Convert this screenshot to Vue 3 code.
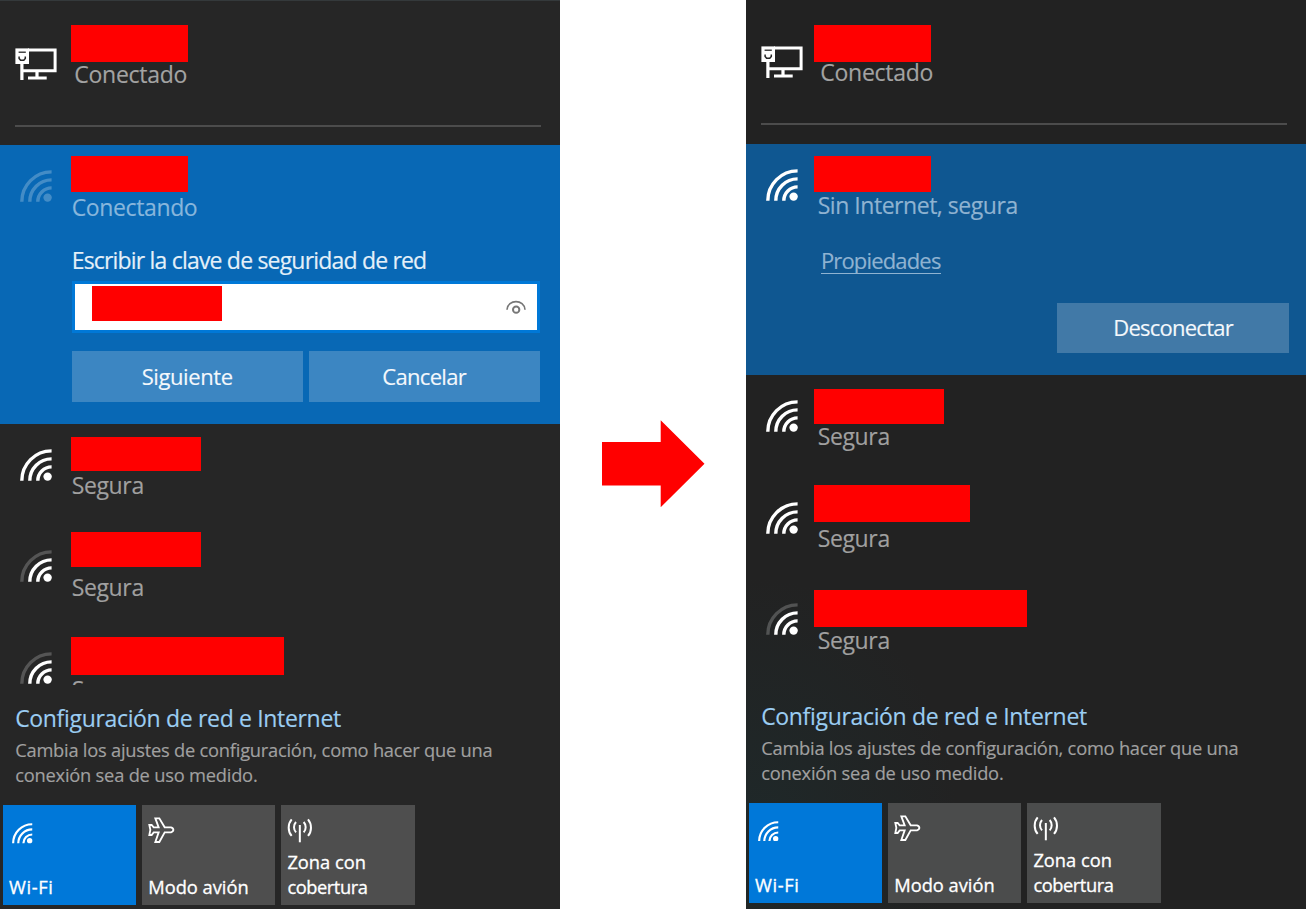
<script setup>
import { h } from 'vue'

// Spreads the letters of a label so that it spans the given width.
const vFit = {
  mounted(el, { value }) {
    const natural = el.getBoundingClientRect().width
    const gaps = el.textContent.trim().length - 1
    el.style.letterSpacing = `${(value - natural) / gaps}px`
  },
}

const WifiIcon = (props) =>
  h('svg', { viewBox: '0 0 32 32', fill: 'none', stroke: 'currentColor', 'stroke-width': props.thin ? 2.7 : 3.4 }, [
    h('path', { d: 'M1.8 31.7A29.8 29.8 0 0 1 31.6 1.9', 'stroke-opacity': props.weak ? 0.22 : 1 }),
    h('path', { d: 'M9.8 31.7A21.8 21.8 0 0 1 31.6 9.9' }),
    h('path', { d: 'M17.8 31.7A13.8 13.8 0 0 1 31.6 17.9' }),
    h('circle', { cx: 27.6, cy: 27.6, r: 4.2, fill: 'currentColor', stroke: 'none' }),
  ])
WifiIcon.props = ['weak', 'thin']

const panels = [
  {
    side: 'left',
    active: { icon: 'dim', status: 'Conectando', fit: 126, mask: [11, 117, 36] },
    rows: [
      { weak: false, mask: [13.5, 130, 34] },
      { weak: true, mask: [7, 130, 35] },
      { weak: true, mask: [10.5, 213, 38] },
    ],
  },
  {
    side: 'right',
    active: { icon: '', status: 'Sin Internet, segura', fit: 200.5, mask: [12, 117, 36] },
    rows: [
      { weak: false, mask: [14, 130, 35] },
      { weak: false, mask: [8.5, 156, 37] },
      { weak: true, mask: [12, 213, 37] },
    ],
  },
]

const maskStyle = ([top, width, height]) => ({ top: `${top}px`, width: `${width}px`, height: `${height}px` })
</script>

<template>
  <main class="board">
    <template v-for="p in panels" :key="p.side">
      <section class="panel" :class="p.side">
        <header class="wired">
          <svg class="pc" viewBox="0 0 42 32" fill="none" stroke="#fff">
            <path d="M13 1.9H40.1V22.7H8" stroke-width="3" />
            <path d="M6.9 15V32M22 23V29" stroke-width="3.2" />
            <path d="M13 30H31.7" stroke-width="3" />
            <path d="M.4 .4H14V16H.4Z" fill="#fff" stroke="none" />
            <path d="M3.6 4.2H10.8" stroke="#262626" stroke-width="1.3" />
            <path d="M4.1 8.4V10.4L5.6 12.2H8.8L10.3 10.4V8.4" stroke="#262626" stroke-width="1.5" />
          </svg>
          <div class="wired-text"><span v-fit="113" class="t">Conectado</span></div>
          <i class="mask wired-mask"></i>
          <hr />
        </header>

        <article class="row active">
          <WifiIcon class="wifi" :class="p.active.icon" />
          <i class="mask" :style="maskStyle(p.active.mask)"></i>
          <div class="body">
            <div class="line"><span v-fit="p.active.fit" class="t status">{{ p.active.status }}</span></div>
            <template v-if="p.side === 'left'">
              <div class="line prompt"><span v-fit="355.5" class="t">Escribir la clave de seguridad de red</span></div>
              <div class="field">
                <i class="secret"></i>
                <svg class="eye" viewBox="0 0 60 44" fill="none" stroke="#777">
                  <path d="M3 29C5 -3 55 -3 57 29" stroke-width="5" />
                  <circle cx="30.5" cy="29" r="9.5" stroke-width="6" />
                </svg>
              </div>
              <div class="buttons">
                <button><span v-fit="91.5" class="t">Siguiente</span></button>
                <button><span v-fit="84.5" class="t">Cancelar</span></button>
              </div>
            </template>
            <template v-else>
              <div class="line link"><a v-fit="120.5" class="t">Propiedades</a></div>
              <div class="buttons single">
                <button><span v-fit="120.5" class="t">Desconectar</span></button>
              </div>
            </template>
          </div>
        </article>

        <div class="list">
          <article v-for="(r, i) in p.rows" :key="i" class="row">
            <WifiIcon class="wifi" :weak="r.weak" />
            <i class="mask" :style="maskStyle(r.mask)"></i>
            <div class="body">
              <div class="line"><span v-fit="72.5" class="t status">Segura</span></div>
            </div>
          </article>
        </div>

        <div class="settings">
          <div class="title"><span v-fit="326" class="t">Configuración de red e Internet</span></div>
          <div class="note"><span v-fit="477.5" class="t">Cambia los ajustes de configuración, como hacer que una</span></div>
          <div class="note"><span v-fit="242.5" class="t">conexión sea de uso medido.</span></div>
        </div>

        <footer class="tiles">
          <div class="tile on">
            <WifiIcon class="tile-wifi" thin />
            <div class="label"><span v-fit="44" class="t">Wi-Fi</span></div>
          </div>
          <div class="tile">
            <svg class="plane" viewBox="0 0 80 80" fill="none" stroke="#fff" stroke-width="5.5">
              <path d="M4 24H11L17 31H32L22 4H34L50 31H69Q76 33 76 38.5Q76 44 69 46H50L34 75H22L32 46H17L11 54H4L7 38.5Z" />
            </svg>
            <div class="label"><span v-fit="100.5" class="t">Modo avión</span></div>
          </div>
          <div class="tile">
            <svg class="antenna" viewBox="0 0 78 76" fill="none" stroke="#fff" stroke-width="6">
              <path d="M38.5 21V73" />
              <path d="M14 4C2 18 2 40 14 54M63 4C75 18 75 40 63 54" />
              <path d="M27 12C19 21 19 34 27 43M50 12C58 21 58 34 50 43" />
            </svg>
            <div class="label">
              <span v-fit="78.5" class="t">Zona con</span>
              <span v-fit="80.5" class="t">cobertura</span>
            </div>
          </div>
        </footer>
      </section>

      <div v-if="p.side === 'left'" class="between">
        <svg class="arrow" viewBox="0 0 103 88"><path d="M0 22H58.7V.3L102.5 43.8L58.7 87.3V65.5H0Z" fill="#f00" /></svg>
      </div>
    </template>
  </main>
</template>

<style>
body {
  background: #fff;
}
</style>

<style scoped>
.board {
  display: flex;
  width: 1306px;
  height: 909px;
  overflow: hidden;
  font: 23px/30px 'Open Sans', 'Noto Sans', sans-serif;
  color: #fff;
}
.panel {
  position: relative;
  display: flex;
  flex-direction: column;
  width: 560px;
  height: 909px;
  overflow: hidden;
  background: #262626;
}
.right {
  background: radial-gradient(ellipse 200px 240px at 2% 90%, #1f2829, transparent), #222;
}
.t {
  display: inline-block;
  white-space: nowrap;
  -webkit-text-stroke: 0.15px currentColor;
}
.wired {
  box-sizing: border-box;
  position: relative;
  flex: none;
  display: flex;
  flex-wrap: wrap;
  align-content: flex-start;
  height: 145px;
  padding: 48px 0 0 15px;
}
.left .wired {
  border-top: 1px solid #34393b;
  padding-top: 47px;
}
.right .wired {
  height: 143.5px;
  padding-top: 46px;
}
.pc {
  width: 42px;
  height: 32px;
}
.wired-text {
  box-sizing: border-box;
  width: 477px;
  height: 78px;
  padding: 11px 0 0 17.3px;
  color: #a3a3a3;
}
hr {
  width: 526px;
  height: 2px;
  margin: -1px 0 0;
  border: 0;
  background: #4c4c4c;
}
.mask {
  position: absolute;
  left: 71px;
  background: #f00;
}
.right .mask {
  left: 68px;
}
.wired-mask {
  top: 25px;
  width: 117px;
  height: 37px;
}
.left .wired-mask {
  top: 24px;
}
.row {
  box-sizing: border-box;
  position: relative;
  flex: none;
  display: flex;
  height: 101.5px;
  padding: 25px 20px 0;
}
.active {
  height: 278.5px;
  background: #0868b5;
}
.right .active {
  height: 231.5px;
  background: #0f5791;
}
.wifi {
  flex: none;
  width: 32px;
  height: 32px;
}
.dim {
  opacity: 0.24;
}
.body {
  flex: none;
  width: 468px;
  padding: 21.5px 0 0 19.7px;
}
.left .list .row:last-child .body {
  padding-top: 22.5px;
}
.right .list .row:first-child .body {
  padding-top: 21px;
}
.line {
  height: 30px;
}
.status {
  color: #a0a0a0;
}
.active .status {
  color: #87b6dc;
}
.right .active .status {
  color: #8fb3d1;
}
.prompt {
  margin-top: 23.3px;
  color: #e4f0f9;
}
.field {
  box-sizing: border-box;
  display: flex;
  justify-content: space-between;
  width: 468px;
  height: 52px;
  margin-top: 6.3px;
  padding: 1.5px 11px 0 17px;
  border: 3px solid #0078d7;
  background: #fff;
}
.secret {
  width: 130px;
  height: 35px;
  background: #f00;
}
.eye {
  width: 20px;
  height: 14.7px;
  margin-top: 14px;
}
.buttons {
  display: flex;
  gap: 6px;
  width: 468px;
  margin-top: 18.2px;
}
button {
  flex: 1;
  height: 50.5px;
  padding: 0;
  border: 0;
  background: #3c86c2;
  color: #f4f8fc;
  font: 22px/49px 'Open Sans', 'Noto Sans', sans-serif;
}
.single {
  margin: 28px 0 0 239.6px;
  width: 231.6px;
}
.single button {
  padding-bottom: 1.5px;
  background: #4179a7;
}
.link {
  margin: 24.8px 0 0 3.2px;
  color: #8fb3d1;
  font-size: 22px;
}
.link a {
  box-sizing: border-box;
  height: 29px;
  border-bottom: 1.5px solid #8fb3d1;
  line-height: 30px;
}
.list {
  flex: none;
  height: 261px;
  overflow: hidden;
}
.right .list {
  height: 307px;
}
.settings {
  padding: 18.1px 0 0 15.2px;
}
.right .settings {
  padding-top: 18.5px;
}
.title {
  height: 34px;
  color: #9bcdf2;
}
.note {
  height: 25px;
  font-size: 18.3px;
  line-height: 25px;
  color: #a0a0a0;
}
.tiles {
  display: flex;
  gap: 6px;
  position: absolute;
  left: 3px;
  top: 805px;
}
.right .tiles {
  top: 802.7px;
}
.tile {
  box-sizing: border-box;
  display: flex;
  flex-direction: column;
  justify-content: space-between;
  width: 133.2px;
  height: 100px;
  padding: 12px 0 6px 6px;
  background: #4e4e4e;
}
.right .tile {
  background: #4b4c4c;
}
.panel .tile.on {
  background: #0078d9;
}
.tile-wifi {
  width: 20.5px;
  height: 20.5px;
  margin: 6px 0 0 3px;
}
.plane {
  width: 26.7px;
  height: 26.7px;
}
.antenna {
  width: 26px;
  height: 25.3px;
  margin: 1px 0 0 -0.3px;
}
.label {
  display: flex;
  flex-direction: column;
  align-items: flex-start;
  font-size: 18.3px;
  line-height: 25px;
}
.label .t {
  -webkit-text-stroke-width: 0.3px;
}
.between {
  display: flex;
  align-items: center;
  box-sizing: border-box;
  width: 186px;
  padding: 18px 0 0 42px;
}
.arrow {
  width: 103px;
  height: 88px;
}
</style>
